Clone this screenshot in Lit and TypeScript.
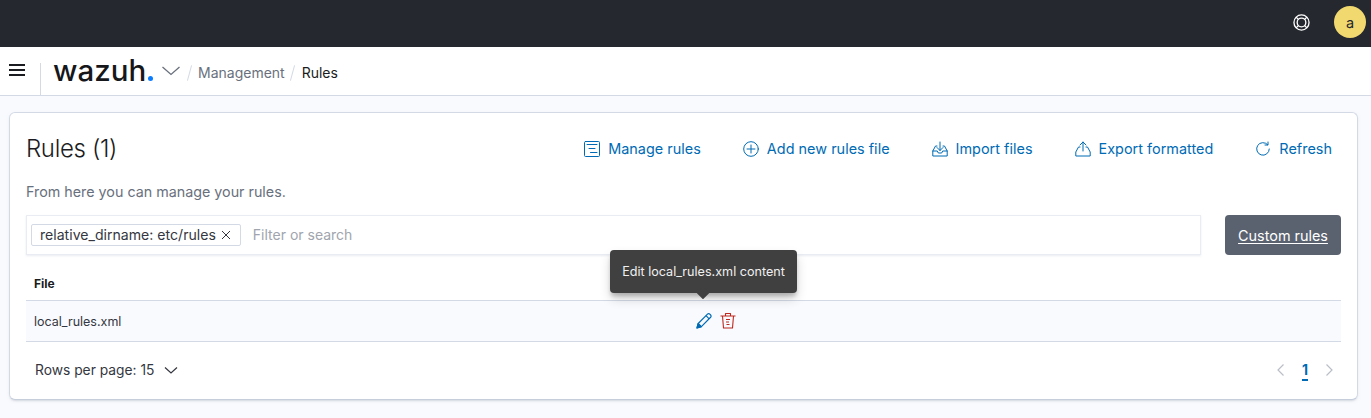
import { LitElement, html, svg, css } from 'lit';
import { customElement } from 'lit/decorators.js';

const icon = (body: unknown) => html`<svg class="ico" viewBox="0 0 16 16" fill="none" stroke="currentColor" stroke-width="1" stroke-linecap="round" stroke-linejoin="round">${body}</svg>`;

@customElement('app-root')
export class AppRoot extends LitElement {
  static override styles = css`
    :host {
      display: block;
      position: relative;
      width: 1371px;
      height: 418px;
      overflow: hidden;
      background: #f9fafd;
      font-family: Inter, "Noto Sans", sans-serif;
      font-size: 14px;
      color: #343741;
    }

    .topbar {
      height: 47px;
      background: #25282f;
      display: flex;
      align-items: center;
      justify-content: flex-end;
      padding-right: 5px;
      box-sizing: border-box;
    }

    .help { width: 17px; height: 17px; color: #fff; margin-right: 24px; margin-top: -3px; }

    .avatar {
      width: 32px;
      height: 32px;
      border-radius: 50%;
      background: #f1d86f;
      color: #25282f;
      display: flex;
      align-items: center;
      justify-content: center;
      font-size: 14.5px;
      margin-top: -3px;
    }

    .navbar {
      height: 49px;
      background: #fff;
      border-bottom: 1px solid #d3dae6;
      box-sizing: border-box;
      display: flex;
      align-items: center;
    }

    .burger { width: 16px; height: 12px; margin: -3px 0 0 9px; display: flex; flex-direction: column; justify-content: space-between; }
    .burger span { height: 2px; background: #1a1c21; display: block; }

    .navsep { width: 1px; height: 32px; background: #d3dae6; margin: 16px 0 0 15px; align-self: flex-start; }

    .logo {
      font-size: 29.5px;
      font-weight: 500;
      color: #15171a;
      margin-left: 12px;
      width: 100px;
      line-height: 1;
      margin-top: -1px;
      display: flex;
      align-items: baseline;
    }

    .logo i { flex: none; width: 5px; height: 5px; border-radius: 50%; background: #0a7cff; display: block; margin-left: 2px; }

    .caret { width: 20px; height: 20px; color: #69707d; margin-left: 8px; margin-top: -1px; }

    .crumbs { display: flex; align-items: center; margin-left: 8px; margin-top: 3px; }
    .crumbs .slash { width: 1px; height: 16px; background: #d3dae6; transform: rotate(15deg); }
    .crumbs .mid { color: #69707d; margin: 0 7px 0 8px; }
    .crumbs .cur { color: #1a1c21; margin-left: 9px; }

    .card {
      margin: 16px 13px 0 9px;
      height: 288px;
      box-sizing: border-box;
      background: #fff;
      border: 1px solid #d3dae6;
      border-bottom-color: #c6cddb;
      border-radius: 6px;
      box-shadow: 0 2px 2px -1px rgba(152, 162, 179, 0.3), 0 1px 5px -2px rgba(152, 162, 179, 0.3);
      padding: 0 16px;
      position: relative;
    }

    .head { display: flex; justify-content: space-between; align-items: center; height: 71px; }

    h1 { margin: 0; font-size: 24px; font-weight: 300; color: #1a1c21; line-height: 36px; letter-spacing: -0.35px; }

    .actions { display: flex; margin-right: 9px; font-size: 14.4px; letter-spacing: 0.03px; }

    .action {
      display: flex;
      align-items: center;
      color: #006bb4;
      gap: 8px;
      margin-left: 42px;
    }

    .ico { width: 16px; height: 16px; flex: none; }

    .sub { color: #69707d; margin: 0; line-height: 20px; margin-top: -2px; font-size: 14.3px; }

    .filters { display: flex; margin-top: 13px; gap: 24px; }

    .search {
      flex: 1;
      height: 40px;
      box-sizing: border-box;
      background: #fff;
      border: 1px solid #e9edf3;
      box-shadow: 0 1px 2px rgba(152, 162, 179, 0.2);
      display: flex;
      align-items: center;
      padding-left: 4px;
    }

    .chip {
      height: 22px;
      box-sizing: border-box;
      border: 1px solid #d3dae6;
      border-radius: 2px;
      padding: 0 9px 0 8px;
      display: flex;
      align-items: center;
      gap: 5px;
      color: #343741;
      font-size: 14.1px;
      margin-top: -1px;
    }

    .chip svg { width: 10px; height: 10px; color: #343741; }

    .placeholder { color: #a0a5ae; margin-left: 12px; margin-top: -2px; }

    .custom {
      width: 116px;
      height: 40px;
      border-radius: 4px;
      background: #5a6270;
      color: #fff;
      font-size: 14.4px;
      display: flex;
      align-items: center;
      justify-content: center;
      text-decoration: underline;
      text-underline-offset: 2px;
    }

    .th {
      height: 46px;
      box-sizing: border-box;
      border-bottom: 1px solid #d3dae6;
      display: flex;
      align-items: center;
      padding: 12px 8px 0;
      font-size: 12px;
      font-weight: 700;
      color: #1a1c21;
    }

    .tr {
      height: 41px;
      box-sizing: border-box;
      background: #f9fafd;
      border-bottom: 1px solid #d3dae6;
      display: flex;
      align-items: center;
      padding: 0 8px;
      font-size: 12.5px;
      position: relative;
    }

    .row-actions { position: absolute; left: 670px; top: 11px; display: flex; gap: 8px; }
    .row-actions svg { width: 16px; height: 17px; }
    .edit { color: #006bb4; }
    .del { color: #bd271e; }

    .foot { display: flex; justify-content: space-between; align-items: center; height: 55px; padding: 0 9px; }
    .rows { display: flex; align-items: center; gap: 9px; font-size: 13.8px; }
    .rows svg { width: 16px; height: 16px; color: #343741; }

    .pager { display: flex; align-items: center; gap: 14px; margin-right: -4px; }
    .pager svg { width: 14px; height: 14px; color: #b9bec7; }
    .pager b {
      color: #006bb4;
      text-decoration: underline;
      text-decoration-thickness: 2px;
      text-underline-offset: 4px;
      font-weight: 700;
    }

    .tooltip {
      position: absolute;
      left: 610px;
      top: 250px;
      width: 187px;
      height: 43px;
      box-sizing: border-box;
      background: #404040;
      color: #f0f0f0;
      border-radius: 4px;
      font-size: 12.6px;
      display: flex;
      align-items: center;
      justify-content: center;
      box-shadow: 0 6px 12px -1px rgba(0, 0, 0, 0.2), 0 4px 4px -1px rgba(0, 0, 0, 0.2);
    }

    .tooltip::after {
      content: '';
      position: absolute;
      left: 87px;
      bottom: -6px;
      width: 12px;
      height: 12px;
      background: #404040;
      transform: rotate(45deg) scale(0.75);
      border-radius: 1px;
    }
  `;

  override render() {
    return html`
      <div class="topbar">
        <svg class="help" viewBox="0 0 18 18" fill="none" stroke="currentColor" stroke-width="1.400">
          <circle cx="9" cy="9" r="8"></circle>
          <circle cx="9" cy="9" r="4.600"></circle>
          <path d="M3.300 3.300l2.500 2.500M14.700 3.300l-2.500 2.500M3.300 14.700l2.500-2.500M14.700 14.700l-2.500-2.500"></path>
        </svg>
        <div class="avatar">a</div>
      </div>
      <div class="navbar">
        <div class="burger"><span></span><span></span><span></span></div>
        <div class="navsep"></div>
        <div class="logo">wazuh<i></i></div>
        <svg class="caret" viewBox="0 0 20 20" fill="none" stroke="currentColor" stroke-width="1.300"><path d="M1.500 6l8.500 7.500L18.500 6"></path></svg>
        <div class="crumbs">
          <span class="slash"></span>
          <span class="mid">Management</span>
          <span class="slash"></span>
          <span class="cur">Rules</span>
        </div>
      </div>
      <div class="card">
        <div class="head">
          <h1>Rules (1)</h1>
          <div class="actions">
            <div class="action">
              ${icon(svg`<rect x="0.500" y="0.500" width="15" height="15" rx="1"></rect><path d="M3 3.500h10M5 7.500h6M6.500 11.500h6.500"></path>`)}
              Manage rules
            </div>
            <div class="action">
              ${icon(svg`<circle cx="8" cy="8" r="7.300"></circle><path d="M8 4v8M4 8h8"></path>`)}
              Add new rules file
            </div>
            <div class="action">
              ${icon(svg`<path d="M8 1v8.500M5 6.500l3 3 3-3M5 5H3.500L0.800 10v5h14.400v-5L12.500 5H11M0.800 10h4.500l1 2h3.400l1-2h4.500"></path>`)}
              Import files
            </div>
            <div class="action">
              ${icon(svg`<path d="M8 10V1M5 4l3-3 3 3M5 6H3.500L0.800 11v4h14.400v-4L12.500 6H11"></path>`)}
              Export formatted
            </div>
            <div class="action">
              ${icon(svg`<path d="M12.800 3.800A6.300 6.300 0 1 0 14.300 8M13 1v3h-3"></path>`)}
              Refresh
            </div>
          </div>
        </div>
        <p class="sub">From here you can manage your rules.</p>
        <div class="filters">
          <div class="search">
            <div class="chip">
              relative_dirname: etc/rules
              <svg viewBox="0 0 10 10" fill="none" stroke="currentColor" stroke-width="1"><path d="M1 1l8 8M9 1l-8 8"></path></svg>
            </div>
            <span class="placeholder">Filter or search</span>
          </div>
          <div class="custom">Custom rules</div>
        </div>
        <div class="th">File</div>
        <div class="tr">
          local_rules.xml
          <div class="row-actions">
            <svg class="edit" viewBox="0 0 16 17" fill="none" stroke="currentColor" stroke-width="1.200" stroke-linejoin="round">
              <path d="M1 16l1.200-4.500L11.500 2.200a1.600 1.600 0 0 1 2.300 0l.8.8a1.600 1.600 0 0 1 0 2.300L5.400 14.600z"></path>
              <path d="M1 16l1.200-4.500 3.200 3.100z" fill="currentColor"></path>
              <path d="M10 3.700l3.200 3.200"></path>
            </svg>
            <svg class="del" viewBox="0 0 16 17" fill="none" stroke="currentColor" stroke-width="1.100" stroke-linejoin="round">
              <path d="M0.500 4h15M5.500 4V1.500h5V4M2.500 4l1 12h9l1-12M6 7.500h4M6 10h3M6.500 12.500h3"></path>
            </svg>
          </div>
        </div>
        <div class="foot">
          <div class="rows">
            Rows per page: 15
            <svg viewBox="0 0 16 16" fill="none" stroke="currentColor" stroke-width="1.200"><path d="M2 5.500l6 5.500 6-5.500"></path></svg>
          </div>
          <div class="pager">
            <svg viewBox="0 0 14 14" fill="none" stroke="currentColor" stroke-width="1.200"><path d="M9.500 1.500L4 7l5.500 5.500"></path></svg>
            <b>1</b>
            <svg viewBox="0 0 14 14" fill="none" stroke="currentColor" stroke-width="1.200"><path d="M4.500 1.500L10 7l-5.500 5.500"></path></svg>
          </div>
        </div>
      </div>
      <div class="tooltip">Edit local_rules.xml content</div>
    `;
  }
}
